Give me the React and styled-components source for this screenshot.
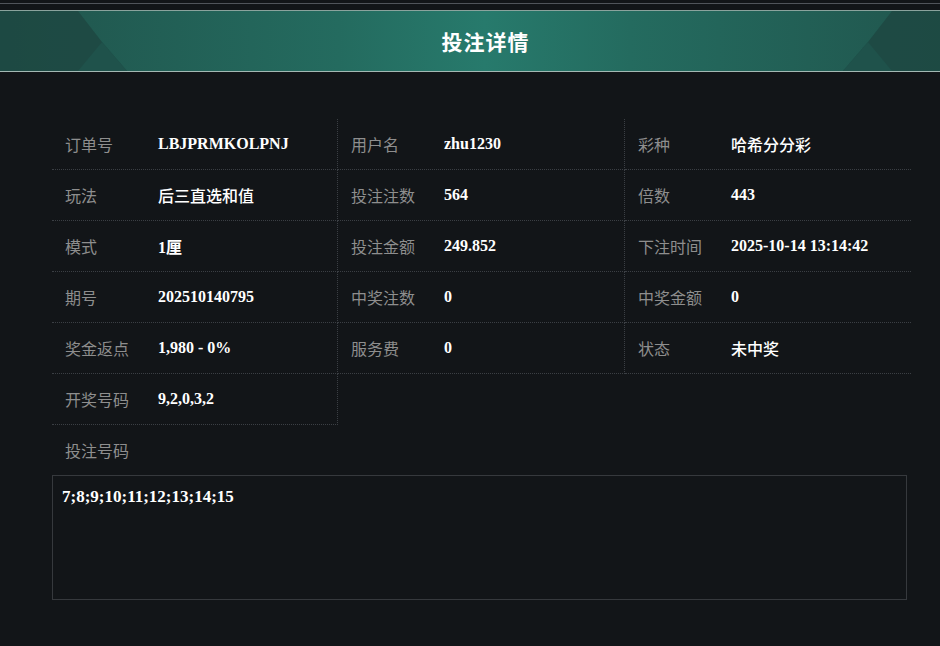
import React from 'react';
import styled, { createGlobalStyle } from 'styled-components';

const GlobalStyle = createGlobalStyle`
  html, body {
    margin: 0;
    padding: 0;
    background: #121518;
    overflow: hidden;
  }
  body {
    font-family: "Liberation Sans", "Noto Sans CJK SC", sans-serif;
  }
`;

const rows = [
  ['订单号', 'LBJPRMKOLPNJ'],
  ['用户名', 'zhu1230'],
  ['彩种', '哈希分分彩'],
  ['玩法', '后三直选和值'],
  ['投注注数', '564'],
  ['倍数', '443'],
  ['模式', '1厘'],
  ['投注金额', '249.852'],
  ['下注时间', '2025-10-14 13:14:42'],
  ['期号', '202510140795'],
  ['中奖注数', '0'],
  ['中奖金额', '0'],
  ['奖金返点', '1,980 - 0%'],
  ['服务费', '0'],
  ['状态', '未中奖'],
  ['开奖号码', '9,2,0,3,2'],
];

// values written only in Chinese are drawn a little lighter
const isCjk = (s) => /^[\u4e00-\u9fff]+$/.test(s);

const Corner = ({ flip }) => (
  <CornerSvg $flip={flip} width="130" height="60" viewBox="0 0 130 60">
    <polygon points="0,0 78,0 102,31 127,60 0,60" fill="#1d4842" opacity="0.85" />
    <polygon points="78,60 102,31 127,60" fill="#1f524b" />
  </CornerSvg>
);

const App = () => {
  return (
    <>
      <GlobalStyle />
      <Modal>
        <TopRule />
        <Header>
          <Corner />
          <Corner flip />
          <Title>投注详情</Title>
        </Header>
        <Content>
          <InfoGrid>
            {rows.map(([label, value], i) => (
              <Cell key={label} $last={i % 3 === 2}>
                <Label>{label}</Label>
                <Value $cjk={isCjk(value)}>{value}</Value>
              </Cell>
            ))}
          </InfoGrid>
          <BetLabel>投注号码</BetLabel>
          <BetBox>7;8;9;10;11;12;13;14;15</BetBox>
        </Content>
      </Modal>
    </>
  );
};

const Modal = styled.div`
  width: 970px;
  height: 646px;
  padding-top: 3px;
  box-sizing: border-box;
  background: #121518;
`;

const TopRule = styled.div`
  height: 1px;
  background: #50545a;
  margin-bottom: 6px;
`;

const Header = styled.div`
  position: relative;
  height: 60px;
  border-top: 1px solid #8aa39d;
  border-bottom: 1px solid #a3b8b3;
  background: linear-gradient(90deg, #20544c 0%, #246b5f 35%, #277a6c 50%, #246b5f 65%, #20544c 100%);
  display: flex;
  align-items: center;
  justify-content: center;
  overflow: hidden;
`;

const CornerSvg = styled.svg`
  position: absolute;
  top: 0;
  ${(p) => (p.$flip ? 'right: 0; transform: scaleX(-1);' : 'left: 0;')}
`;

const Title = styled.h1`
  position: relative;
  margin: 0;
  color: #ffffff;
  font-family: "Noto Sans CJK SC", sans-serif;
  font-size: 21px;
  font-weight: 700;
  letter-spacing: 1px;
  padding-left: 1px;
`;

const Content = styled.div`
  padding: 47px 59px 0 52px;
`;

const InfoGrid = styled.div`
  display: grid;
  grid-template-columns: 286px 287px 286px;
`;

const Cell = styled.div`
  display: flex;
  align-items: center;
  height: 50px;
  border-bottom: 1px dotted #3b3f44;
  border-right: ${(p) => (p.$last ? 'none' : '1px dotted #3b3f44')};
  padding-left: 13px;
`;

const Label = styled.span`
  width: 93px;
  flex-shrink: 0;
  color: #8e8e8e;
  font-family: "Noto Sans CJK SC", sans-serif;
  font-size: 16px;
  margin-top: -1px;
`;

const Value = styled.span`
  color: #ffffff;
  font-family: "Liberation Serif", "Noto Sans CJK SC", serif;
  font-size: 16px;
  font-weight: ${(p) => (p.$cjk ? 500 : 700)};
  margin-top: -1px;
`;

const BetLabel = styled.div`
  height: 50px;
  display: flex;
  align-items: center;
  padding-left: 13px;
  color: #8e8e8e;
  font-family: "Noto Sans CJK SC", sans-serif;
  font-size: 16px;
`;

const BetBox = styled.div`
  width: 855px;
  height: 125px;
  box-sizing: border-box;
  border: 1px solid #36393d;
  padding: 11px 9px;
  color: #ffffff;
  font-family: "Liberation Serif", serif;
  font-size: 17px;
  font-weight: 700;
  line-height: 20px;
`;

export default App;
